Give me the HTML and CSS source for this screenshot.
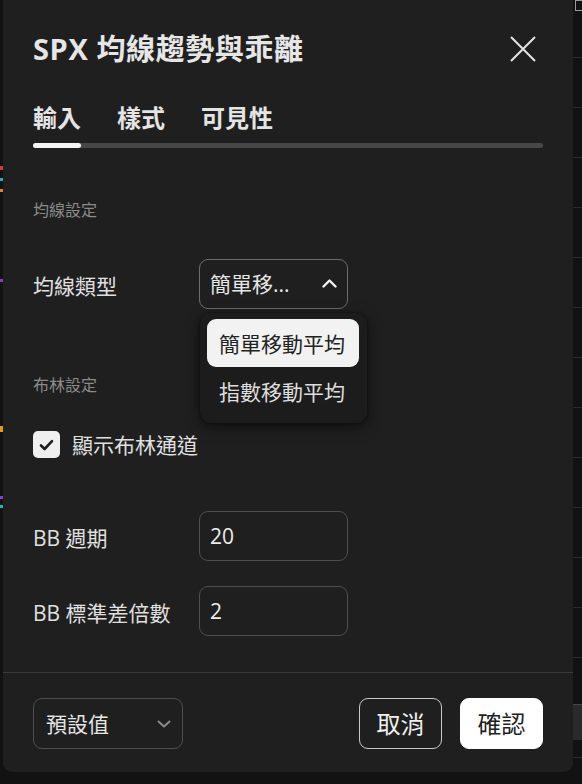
FILE: index.html
```html
<!DOCTYPE html>
<html lang="zh-Hant">
<head>
<meta charset="utf-8">
<title>SPX 均線趨勢與乖離</title>
<link rel="stylesheet" href="styles.css">
</head>
<body>
<div class="edge-left"></div>
<div class="modal">
  <header class="head">
    <h1 class="title">SPX 均線趨勢與乖離</h1>
    <button class="close" aria-label="關閉">
      <svg width="26" height="26" viewBox="0 0 26 26"><path d="M1 1L25 25M25 1L1 25" stroke="#e4e4e4" stroke-width="2" fill="none"/></svg>
    </button>
  </header>
  <nav class="tabs">
    <span class="tab">輸入</span>
    <span class="tab">樣式</span>
    <span class="tab">可見性</span>
  </nav>
  <div class="track"><div class="thumb"></div></div>

  <main class="body">
    <div class="section section-first">均線設定</div>
    <div class="row row-first">
      <span class="label">均線類型</span>
      <div class="select">
        <span class="value">簡單移...</span>
        <svg class="chev" width="15" height="9" viewBox="0 0 15 9"><path d="M1.5 7.5L7.5 1.5L13.5 7.5" stroke="#f0f0f0" stroke-width="2.4" fill="none" stroke-linecap="round" stroke-linejoin="round"/></svg>
        <ul class="menu">
          <li class="item item-selected">簡單移動平均</li>
          <li class="item">指數移動平均</li>
        </ul>
      </div>
    </div>

    <div class="section section-second">布林設定</div>
    <label class="check-row">
      <span class="checkbox">
        <svg width="15" height="12" viewBox="0 0 15 12"><path d="M2 6.5L5.6 10L13 2.2" stroke="#1f1f1f" stroke-width="2.6" fill="none" stroke-linecap="round" stroke-linejoin="round"/></svg>
      </span>
      <span class="check-label">顯示布林通道</span>
    </label>

    <div class="row row-bb1">
      <span class="label">BB 週期</span>
      <div class="input">20</div>
    </div>
    <div class="row row-bb2">
      <span class="label">BB 標準差倍數</span>
      <div class="input">2</div>
    </div>
  </main>

  <footer class="foot">
    <div class="preset">
      <span class="value">預設值</span>
      <svg width="14" height="8" viewBox="0 0 14 8"><path d="M1.5 1.5L7 6.5L12.5 1.5" stroke="#8a8a8a" stroke-width="2" fill="none" stroke-linecap="round" stroke-linejoin="round"/></svg>
    </div>
    <div class="actions">
      <button class="btn btn-cancel">取消</button>
      <button class="btn btn-ok">確認</button>
    </div>
  </footer>
</div>
<div class="edge-right">
  <div class="sq"></div>
  <div class="menu-btn"></div>
</div>
</body>
</html>
```
FILE: styles.css
```css
* { box-sizing: border-box; }

html, body {
  margin: 0;
  padding: 0;
}

body {
  width: 582px;
  height: 784px;
  overflow: hidden;
  background: #121212;
  display: flex;
  align-items: flex-start;
  font-family: "Open Sans", "Noto Sans CJK TC", sans-serif;
  color: #e3e3e3;
}

.edge-left {
  width: 3px;
  height: 784px;
  flex: none;
  background:
    linear-gradient(to bottom,
      transparent 0 166px, #c8413c 166px 170px, transparent 170px 178px,
      #2ab0b8 178px 181px, transparent 181px 189px, #e0813a 189px 192px,
      transparent 192px 279px, #8a3ac0 279px 282px, transparent 282px 426px,
      #e09a20 426px 432px, transparent 432px 496px, #8a3ac0 496px 499px,
      transparent 499px 505px, #2ab0b8 505px 508px, transparent 508px);
}

.modal {
  width: 570px;
  height: 772px;
  flex: none;
  background: #1f1f1f;
  border-radius: 0 0 9px 9px;
  display: flex;
  flex-direction: column;
}

/* header */
.head {
  display: flex;
  justify-content: space-between;
  align-items: center;
  padding: 28px 30px 0 30px;
}

.title {
  margin: 0;
  font-size: 29px;
  line-height: 40px;
  font-weight: 700;
  color: #e6e6e6;
  letter-spacing: 0.6px;
}

.close {
  width: 40px;
  height: 40px;
  padding: 0;
  border: 0;
  background: transparent;
  display: flex;
  align-items: center;
  justify-content: center;
  margin-top: 1px;
}

/* tabs */
.tabs {
  display: flex;
  gap: 36px;
  padding: 0 30px;
  margin-top: 33px;
}

.tab {
  font-size: 24px;
  line-height: 32px;
  font-weight: 700;
  color: #e4e4e4;
}

.track {
  margin: 9px 30px 0 30px;
  height: 5px;
  border-radius: 3px;
  background: #474747;
}

.thumb {
  width: 48px;
  height: 5px;
  border-radius: 3px;
  background: #f4f4f4;
}

/* body */
.body {
  flex: 1;
  padding: 0 30px;
  display: flex;
  flex-direction: column;
}

.section {
  font-size: 16px;
  line-height: 20px;
  color: #8a8a8a;
}

.section-first { margin-top: 52px; }
.section-second { margin-top: 66px; }

.row {
  display: grid;
  grid-template-columns: 166px 149px;
  align-items: center;
}

.row-first { margin-top: 39px; }
.row-bb1 { margin-top: 52px; }
.row-bb2 { margin-top: 25px; }

.label {
  font-size: 21px;
  line-height: 28px;
  color: #e0e0e0;
  padding-top: 3px;
}

.select {
  position: relative;
  height: 50px;
  border: 1px solid #6d6d6d;
  border-radius: 9px;
  display: flex;
  align-items: center;
  justify-content: space-between;
  padding: 0 10px 0 10px;
}

.value {
  font-size: 21px;
  line-height: 28px;
  color: #e6e6e6;
}

.chev { margin-top: -2px; }

.menu {
  position: absolute;
  left: 0;
  top: 53px;
  width: 167px;
  margin: 0;
  padding: 6px 8px 8px 7px;
  list-style: none;
  background: #1c1c1c;
  border-radius: 11px;
  box-shadow: 0 4px 14px rgba(0, 0, 0, 0.55), 0 0 3px rgba(0, 0, 0, 0.4);
  z-index: 5;
}

.item {
  height: 48px;
  border-radius: 9px;
  display: flex;
  align-items: center;
  padding-left: 12px;
  font-size: 21px;
  color: #dedede;
}

.item-selected {
  background: #f2f2f2;
  color: #222222;
}

/* checkbox */
.check-row {
  margin-top: 35px;
  display: flex;
  align-items: center;
  gap: 12px;
}

.checkbox {
  width: 27px;
  height: 27px;
  border-radius: 5px;
  background: #efefef;
  display: flex;
  align-items: center;
  justify-content: center;
}

.check-label {
  font-size: 21px;
  line-height: 28px;
  color: #e0e0e0;
  padding-top: 1px;
}

/* inputs */
.input {
  height: 50px;
  border: 1px solid #4f4f4f;
  border-radius: 9px;
  display: flex;
  align-items: center;
  padding-left: 10px;
  font-size: 21px;
  color: #ececec;
}

/* footer */
.foot {
  border-top: 1px solid #3a3a3a;
  padding: 25px 30px 23px 30px;
  display: flex;
  justify-content: space-between;
  align-items: center;
}

.preset {
  width: 150px;
  height: 51px;
  border: 1px solid #4e4e4e;
  border-radius: 9px;
  display: flex;
  align-items: center;
  justify-content: space-between;
  padding: 0 11px 0 12px;
}

.actions {
  display: flex;
  gap: 18px;
}

.btn {
  width: 83px;
  height: 51px;
  border-radius: 9px;
  font-family: "Open Sans", "Noto Sans CJK TC", sans-serif;
  font-size: 24px;
  line-height: 30px;
  padding: 0;
}

.btn-cancel {
  background: transparent;
  border: 1px solid #c9c9c9;
  color: #f0f0f0;
}

.btn-ok {
  background: #ffffff;
  border: 1px solid #ffffff;
  color: #1f1f1f;
}

/* chart edge */
.edge-right {
  flex: 1;
  height: 784px;
  background-color: #121212;
  background-image: repeating-linear-gradient(to bottom, transparent 0 49px, #2a2a2a 49px 50px);
  background-position: 0 8px;
  display: flex;
  flex-direction: column;
}

.sq {
  width: 8px;
  height: 11px;
  margin-left: 2px;
  border: 1px solid #9a9a9a;
  background: #121212;
}

.menu-btn {
  margin-top: 693px;
  height: 36px;
  background: #2a2a2a;
  border-top: 1px solid #444;
}
```
